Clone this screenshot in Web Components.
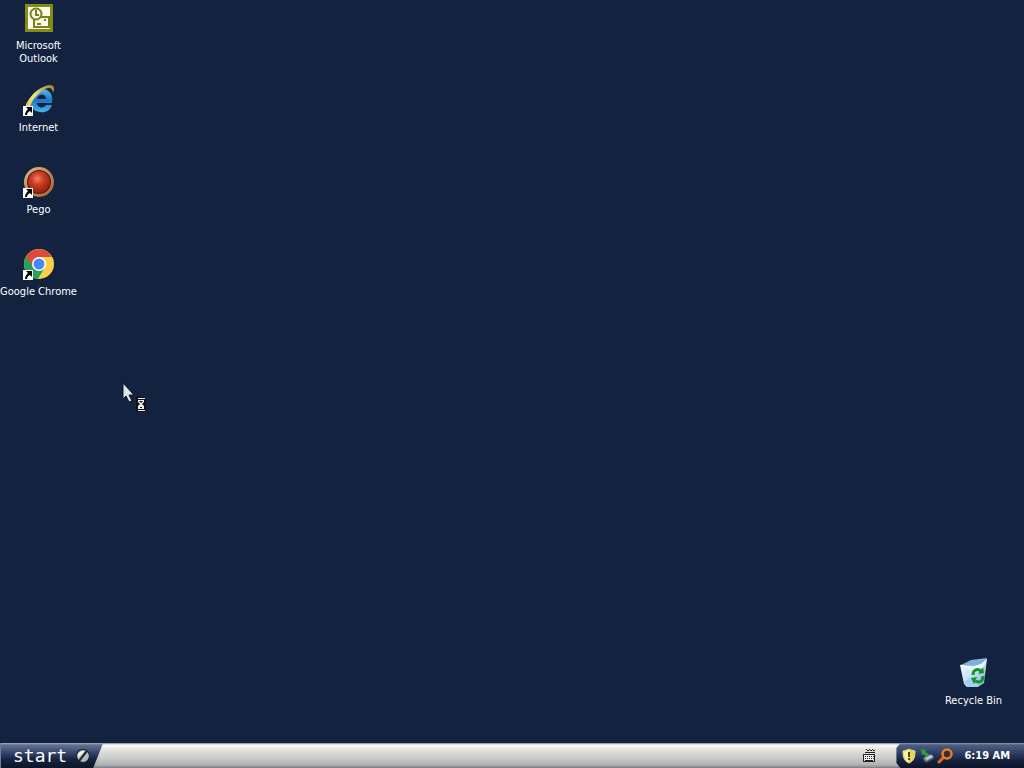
<!DOCTYPE html>
<html lang="en">
<head>
<meta charset="utf-8">
<title>Desktop</title>
<style>
    html, body {
        height: 100%;
        margin: 0;
    }
    body {
        background: #13223f;
        color: #fff;
        font: 11px/13px "DejaVu Sans Condensed", Tahoma, sans-serif;
        overflow: hidden;
    }
    svg {
        display: block;
    }
</style>
</head>
<body>
<xp-desktop>
    <desktop-icon slot="icons" label="Microsoft Outlook">
        <svg width="32" height="32" viewBox="0 0 32 32">
            <path fill="#858b14" d="M2 2h28v28H2z"/>
            <path fill="#fbfbec" d="M5 5h22v22H5z"/>
            <g fill="none" stroke="#7b8018" stroke-width="2">
                <path fill="#fbfbec" d="M11 15h15v10H11z"/>
                <path d="M14 22h4M21 18h2"/>
                <circle cx="13" cy="12" r="5.5" fill="#fbfbec"/>
                <path d="M13 8v5h3"/>
            </g>
        </svg>
    </desktop-icon>

    <desktop-icon slot="icons" label="Internet" shortcut>
        <svg width="32" height="32" viewBox="0 0 32 32">
            <defs>
                <linearGradient id="ie" x2="0" y2="1">
                    <stop stop-color="#5ab8ee"/>
                    <stop offset=".5" stop-color="#1f74c4"/>
                    <stop offset="1" stop-color="#45b5f0"/>
                </linearGradient>
                <linearGradient id="ring" x1="0" y1="1" x2="1" y2="0">
                    <stop stop-color="#d9c04a"/>
                    <stop offset=".5" stop-color="#f3e37c"/>
                    <stop offset="1" stop-color="#a07c1c"/>
                </linearGradient>
            </defs>
            <path fill="url(#ie)" fill-rule="evenodd" d="M29 19H14c0 5 7 6 9 2h6c-2 6-7 8-12 7C9 27 6 21 8 14 11 7 18 3 24 6c5 3 6 8 5 13zM14 15h9c0-6-8-6-9 0z"/>
            <path fill="url(#ring)" d="M3 31C-2 23 9 8 20 3c6-3 12-3 11 3l-1 3c0-6-5-6-10-3C11 12 5 22 8 29z"/>
        </svg>
    </desktop-icon>

    <desktop-icon slot="icons" label="Pego" shortcut>
        <svg width="32" height="32" viewBox="0 0 32 32">
            <defs>
                <radialGradient id="ball" cx=".43" cy=".35" r=".65">
                    <stop stop-color="#f08468"/>
                    <stop offset=".4" stop-color="#cf4028"/>
                    <stop offset="1" stop-color="#96200f"/>
                </radialGradient>
                <linearGradient id="rim" x2="1" y2="1">
                    <stop stop-color="#dcc090"/>
                    <stop offset=".5" stop-color="#c08a50"/>
                    <stop offset="1" stop-color="#a9622f"/>
                </linearGradient>
            </defs>
            <circle cx="16" cy="16" r="15" fill="url(#rim)"/>
            <circle cx="16" cy="16" r="12" fill="#54170c"/>
            <circle cx="16" cy="16" r="11" fill="url(#ball)"/>
        </svg>
    </desktop-icon>

    <desktop-icon slot="icons" label="Google Chrome" shortcut>
        <svg width="32" height="32" viewBox="0 0 32 32">
            <circle cx="16" cy="16" r="15" fill="#fdd04a"/>
            <path fill="#25a35a" d="M3 8.5A15 15 0 0 0 15 31l7-12-6-3z"/>
            <path fill="#dd4b3e" d="M3 8.5A15 15 0 0 1 29 9H16l-6 10z"/>
            <circle cx="16" cy="16" r="7" fill="#fff"/>
            <circle cx="16" cy="16" r="5.5" fill="#4688f4"/>
        </svg>
    </desktop-icon>

    <desktop-icon slot="bin" label="Recycle Bin">
        <svg width="32" height="32" viewBox="0 0 32 32">
            <defs>
                <linearGradient id="glass" x2="1" y2="1">
                    <stop stop-color="#fff"/>
                    <stop offset=".5" stop-color="#c3e4f4"/>
                    <stop offset="1" stop-color="#6fa8d8"/>
                </linearGradient>
            </defs>
            <path fill="url(#glass)" d="M2 8l13-2L29 2l-3 24-6 4H9l-3-3z"/>
            <path fill="#7fb0dc" d="M3 8l10-5L29 1l-5 6-9 2z"/>
            <path fill="#eef9ff" d="M3 8l11 2 9-3 6-5-4 9-10 3z"/>
            <path fill="#a5cfee" d="M6 25l7-5 6 3 1 7H9z"/>
            <g fill="none" stroke="#12952a" stroke-width="3">
                <path d="M15 18c0-5 4-7 8-4"/>
                <path d="M25 19c0 6-4 7-8 5"/>
            </g>
            <path fill="#12952a" d="M20 17l6-1-1-6zM19 20l-6 1 3 6z"/>
        </svg>
    </desktop-icon>

    <busy-pointer slot="pointer"></busy-pointer>

    <task-bar slot="bar">
        <start-button slot="start">start</start-button>
        <button slot="language" type="button" aria-label="Keyboard">
            <svg width="14" height="14" viewBox="0 0 14 14" shape-rendering="crispEdges">
                <path fill="#222" d="M4 0h1v1H4zM5 1h2v1H5zM7 0h1v1H7zM8 1h2v1H8zM10 0h1v1h-1zM11 1h2v1h-2zM3 3h10v1H3z"/>
                <path fill="#eee" stroke="#222" d="M1.5 5.5h11v7h-11z"/>
                <path stroke="#222" stroke-dasharray="1 1" d="M3 7.5h9M3 9.5h9"/>
                <path stroke="#222" d="M3 11.5h8"/>
            </svg>
        </button>
        <system-tray slot="tray" time="6:19 AM">
            <svg width="16" height="16" viewBox="0 0 16 16">
                <path fill="#e8d83e" stroke="#d8d9ba" d="M8 1l2 1 4 1c0 6-1 10-6 12C3 13 2 9 2 3l4-1z"/>
                <path fill="#fff59a" d="M8 2v12c-4-2-5-6-5-10l3-1z"/>
                <path fill="#4a4516" d="M7 4h2v5H7zM7 10h2v2H7z"/>
            </svg>
            <svg width="16" height="16" viewBox="0 0 16 16">
                <path fill="#7c8b98" d="M4 10l8-4 3 3-8 5z"/>
                <path fill="#bcc8d0" d="M6 10l6-3 2 2-6 3z"/>
                <path fill="#415564" d="M4 10l3 4 8-5v2l-8 4-3-3z"/>
                <path fill="#2f9f3a" d="M2 1l5 1-1 2 4 2-3 4-2-4-2 1z"/>
            </svg>
            <svg width="16" height="16" viewBox="0 0 16 16">
                <path stroke="#e06c1c" stroke-width="3" stroke-linecap="round" d="M7 9l-5 5"/>
                <circle cx="10" cy="6" r="4.5" fill="#3a2c38" stroke="#ec7d22" stroke-width="2.5"/>
            </svg>
        </system-tray>
    </task-bar>
</xp-desktop>

<script>
// base class: puts the static markup of the element into its shadow root
class XpElement extends HTMLElement {
    constructor() {
        super();
        this.attachShadow({ mode: 'open' });
        this.shadowRoot.innerHTML = this.constructor.markup;
    }
}

class XpDesktop extends XpElement {
    static markup = `
        <style>
            :host {
                display: flex;
                flex-direction: column;
                height: 100vh;
            }
            main {
                flex: 1;
                display: flex;
                justify-content: space-between;
                padding: 2px 12px 4px 0;
            }
            .icons {
                display: flex;
                flex-direction: column;
            }
            .bin {
                align-self: flex-end;
            }
        </style>
        <main>
            <div class="icons"><slot name="icons"></slot></div>
            <div class="bin"><slot name="bin"></slot></div>
        </main>
        <slot name="bar"></slot>
        <slot name="pointer"></slot>
    `;
}

class DesktopIcon extends XpElement {
    static markup = `
        <style>
            :host {
                display: block;
                width: 77px;
                height: 82px;
            }
            a {
                display: flex;
                flex-direction: column;
                align-items: center;
                gap: 5px;
                color: inherit;
                text-align: center;
                text-decoration: none;
            }
            .picture {
                position: relative;
            }
            .arrow {
                display: none;
                position: absolute;
                left: 0;
                bottom: 0;
            }
            :host([shortcut]) .arrow {
                display: block;
            }
        </style>
        <a href="#">
            <span class="picture">
                <slot></slot>
                <svg class="arrow" width="10" height="10" viewBox="0 0 10 10">
                    <path fill="#fff" d="M0 0h10v10H0z"/>
                    <path fill="#000" d="M3 1h6v6L7 5C5 6 4 7 4 9H2c0-2 1-4 3-6z"/>
                </svg>
            </span>
            <span class="label"></span>
        </a>
    `;

    connectedCallback() {
        this.shadowRoot.querySelector('.label').textContent = this.getAttribute('label');
    }
}

// arrow with hourglass
class BusyPointer extends XpElement {
    static markup = `
        <style>
            :host {
                position: absolute;
                left: 122px;
                top: 383px;
                pointer-events: none;
            }
            svg {
                display: block;
            }
        </style>
        <svg width="26" height="30" viewBox="0 0 26 30">
            <path fill="#dfe4e6" stroke="#0a1222" d="M1 0v16l3-3 3 6 3-1-3-6h5z"/>
            <path fill="#111" d="M14 14h10v15H14z"/>
            <path fill="#e8ecec" d="M16 15h7v1h-7zM16 27h7v1h-7zM16 17h6v2l-2 2 2 2v3h-6v-3l2-2-2-2z"/>
            <path fill="#111" d="M17 18h4l-2 2zM18 24h2v1h-2z"/>
        </svg>
    `;
}

class TaskBar extends XpElement {
    static markup = `
        <style>
            :host {
                display: flex;
                align-items: stretch;
                height: 25px;
                background: linear-gradient(#77818f, #fff 2px, #e4e4e2 6px, #cbcbc9 15px, #b0b1b1 22px, #777c83);
            }
            .tasks {
                flex: 1;
            }
            ::slotted(button) {
                display: flex;
                align-items: center;
                margin: 0 20px 0 0;
                padding: 0;
                border: 0;
                background: none;
            }
        </style>
        <slot name="start"></slot>
        <div class="tasks"></div>
        <slot name="language"></slot>
        <slot name="tray"></slot>
    `;
}

class StartButton extends XpElement {
    static markup = `
        <style>
            :host {
                display: flex;
            }
            button {
                display: flex;
                align-items: center;
                gap: 9px;
                margin: 0;
                padding: 0 13px 0 12px;
                border: 0;
                border-left: 1px solid #6c7d9b;
                background: linear-gradient(#a3adc0, #64728f 2px, #34446a 10px, #18243f 16px, #0b1429);
                clip-path: polygon(0 0, 100% 0, calc(100% - 10px) 100%, 0 100%);
                color: #fff;
                font: 18px/20px "DejaVu Sans Mono", monospace;
            }
            svg {
                display: block;
            }
        </style>
        <button type="button">
            <slot></slot>
            <svg width="14" height="14" viewBox="0 0 13 13">
                <circle cx="6.5" cy="6.5" r="6" fill="#b4bbc1" stroke="#172130"/>
                <path fill="#f4f6f6" d="M2 8C1 4 4 1 8 2z"/>
                <path stroke="#1b2431" stroke-width="2" d="M3 11l7-9"/>
            </svg>
        </button>
    `;
}

class SystemTray extends XpElement {
    static markup = `
        <style>
            :host {
                display: flex;
                align-items: center;
                padding: 0 14px 0 5px;
                background: linear-gradient(#8d99b0, #4f5f80 2px, #2d3e66 10px, #17233f 17px, #0b1429);
                clip-path: polygon(4px 0, 100% 0, 100% 100%, 4px 100%, 0 20px, 0 5px);
            }
            .tools {
                display: flex;
                gap: 2px;
                margin-right: 11px;
            }
            time {
                font-weight: bold;
            }
        </style>
        <div class="tools"><slot></slot></div>
        <time></time>
    `;

    connectedCallback() {
        this.shadowRoot.querySelector('time').textContent = this.getAttribute('time');
    }
}

customElements.define('xp-desktop', XpDesktop);
customElements.define('desktop-icon', DesktopIcon);
customElements.define('busy-pointer', BusyPointer);
customElements.define('task-bar', TaskBar);
customElements.define('start-button', StartButton);
customElements.define('system-tray', SystemTray);
</script>
</body>
</html>
